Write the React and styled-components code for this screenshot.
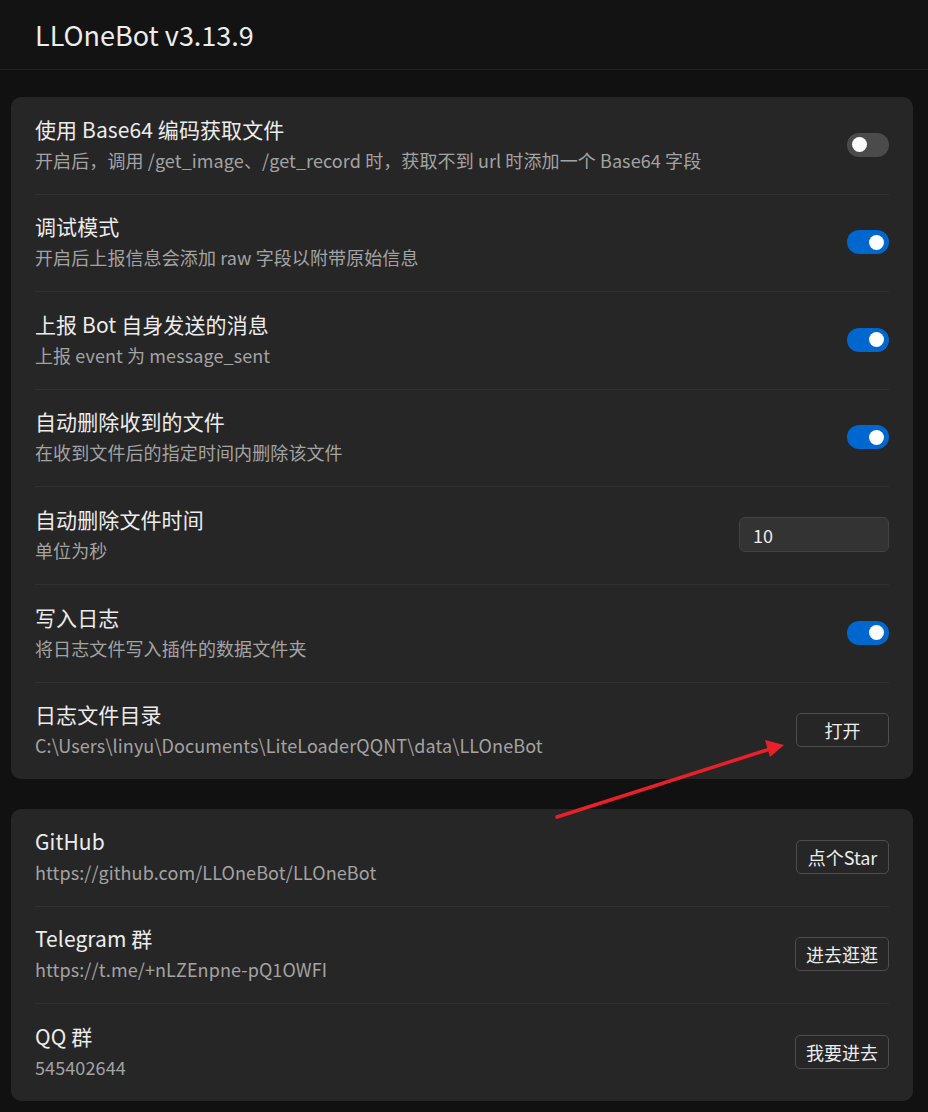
import React from 'react'
import styled, { createGlobalStyle } from 'styled-components'

const GlobalStyle = createGlobalStyle`
  body {
    margin: 0;
    background: #111111;
    font-family: "Noto Sans CJK SC", "Noto Sans", sans-serif;
  }
`

const Page = styled.div`
  position: relative;
  width: 928px;
  min-height: 1112px;
  background: #111111;
  color: #e8e8e8;
`

const Header = styled.div`
  height: 69px;
  display: flex;
  align-items: center;
  padding-left: 35px;
  border-bottom: 1px solid #242424;
  background: #131313;
`

const Title = styled.h1`
  margin: 0;
  font-size: 27px;
  font-weight: 400;
  color: #ececec;
`

const Content = styled.div`
  display: flex;
  flex-direction: column;
  gap: 30px;
  padding: 27px 15px 14px 11px;
`

const Card = styled.div`
  background: #262626;
  border-radius: 10px;
  padding: 0 24px;
`

const Row = styled.div`
  display: flex;
  align-items: center;
  justify-content: space-between;
  padding: 16.6px 0 18px;
  border-bottom: 1px solid #313131;
  &:last-child {
    border-bottom: none;
  }
`

const Info = styled.div`
  display: flex;
  flex-direction: column;
`

const RowTitle = styled.div`
  font-size: 21px;
  line-height: 30px;
  color: #ececec;
  letter-spacing: 0.1px;
`

const RowDesc = styled.div`
  font-size: 18px;
  line-height: 32px;
  color: #a3a3a3;
  letter-spacing: 0.1px;
`

const Switch = styled.div`
  width: 42px;
  height: 24px;
  border-radius: 12px;
  background: ${p => (p.$on ? '#0067cf' : '#4b4b4b')};
  display: flex;
  align-items: center;
  justify-content: ${p => (p.$on ? 'flex-end' : 'flex-start')};
  padding: 0 5px;
  box-sizing: border-box;
  &::after {
    content: '';
    width: 15px;
    height: 15px;
    border-radius: 50%;
    background: #ffffff;
  }
`

const NumberInput = styled.input`
  width: 150px;
  height: 35px;
  box-sizing: border-box;
  background: #333333;
  border: 1px solid #424242;
  border-radius: 6px;
  color: #ececec;
  font-family: inherit;
  font-size: 18px;
  padding: 0 13px;
  outline: none;
`

const Button = styled.button`
  min-width: 93px;
  height: 34px;
  padding: 0 10px;
  box-sizing: border-box;
  background: transparent;
  border: 1px solid #4e4e4e;
  border-radius: 5px;
  color: #ececec;
  font-family: inherit;
  font-size: 18px;
`

const Arrow = styled.svg`
  position: absolute;
  left: 0;
  top: 0;
  pointer-events: none;
`

const settings = [
  { title: '使用 Base64 编码获取文件', desc: '开启后，调用 /get_image、/get_record 时，获取不到 url 时添加一个 Base64 字段', on: false },
  { title: '调试模式', desc: '开启后上报信息会添加 raw 字段以附带原始信息', on: true },
  { title: '上报 Bot 自身发送的消息', desc: '上报 event 为 message_sent', on: true },
  { title: '自动删除收到的文件', desc: '在收到文件后的指定时间内删除该文件', on: true },
]

const links = [
  { title: 'GitHub', desc: 'https://github.com/LLOneBot/LLOneBot', btn: '点个Star' },
  { title: 'Telegram 群', desc: 'https://t.me/+nLZEnpne-pQ1OWFI', btn: '进去逛逛' },
  { title: 'QQ 群', desc: '545402644', btn: '我要进去' },
]

function Item(props) {
  return (
    <Row>
      <Info>
        <RowTitle>{props.title}</RowTitle>
        <RowDesc>{props.desc}</RowDesc>
      </Info>
      {props.children}
    </Row>
  )
}

export default function App() {
  return (
    <Page>
      <GlobalStyle />
      <Header>
        <Title>LLOneBot v3.13.9</Title>
      </Header>
      <Content>
        <Card>
          {settings.map(s => (
            <Item key={s.title} title={s.title} desc={s.desc}>
              <Switch $on={s.on} />
            </Item>
          ))}
          <Item title="自动删除文件时间" desc="单位为秒">
            <NumberInput defaultValue="10" />
          </Item>
          <Item title="写入日志" desc="将日志文件写入插件的数据文件夹">
            <Switch $on />
          </Item>
          <Item title="日志文件目录" desc="C:\Users\linyu\Documents\LiteLoaderQQNT\data\LLOneBot">
            <Button>打开</Button>
          </Item>
        </Card>
        <Card>
          {links.map(l => (
            <Item key={l.title} title={l.title} desc={l.desc}>
              <Button>{l.btn}</Button>
            </Item>
          ))}
        </Card>
      </Content>
      <Arrow width="928" height="1112" viewBox="0 0 928 1112">
        <line x1="557" y1="817" x2="770" y2="749" stroke="#e8202a" strokeWidth="3.5" strokeLinecap="round" />
        <polygon points="784,745 765,740 770,757" fill="#e8202a" />
      </Arrow>
    </Page>
  )
}
